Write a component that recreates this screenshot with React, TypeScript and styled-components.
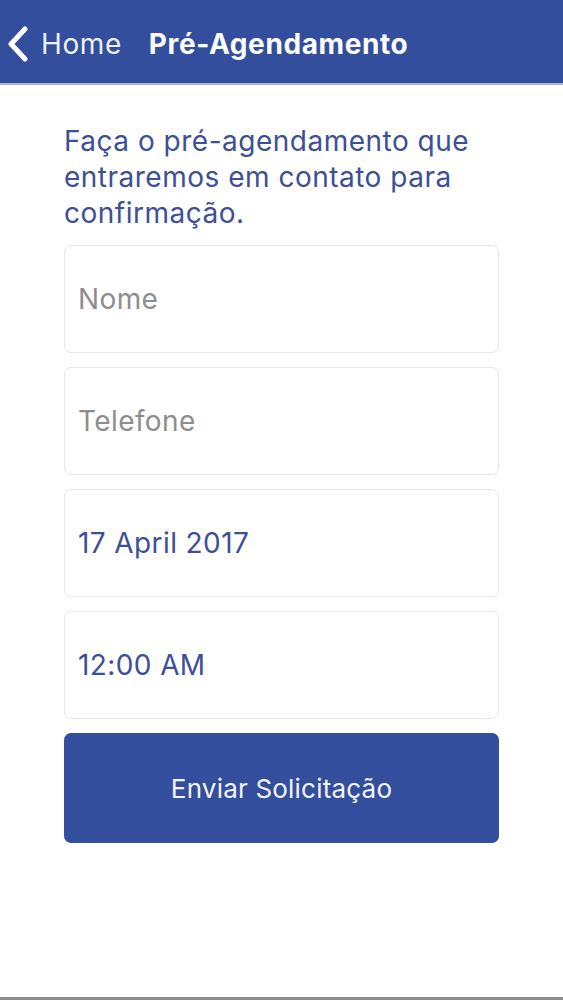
import styled, { createGlobalStyle } from 'styled-components';

const GlobalStyle = createGlobalStyle`
  html, body {
    margin: 0;
    padding: 0;
    background: #ffffff;
    font-family: Inter, Roboto, "Liberation Sans", Arial, sans-serif;
  }
`;

const Screen = styled.div`
  width: 563px;
  height: 1000px;
  display: flex;
  flex-direction: column;
  background: #ffffff;
  box-sizing: border-box;
  border-bottom: 3px solid #8c8c8c;
  overflow: hidden;
`;

const NavBar = styled.header`
  height: 85px;
  flex-shrink: 0;
  background: #324e9d;
  border-bottom: 2px solid #aab4d6;
  box-sizing: border-box;
  display: flex;
  align-items: center;
  padding: 5px 0 0 7px;
  gap: 27px;
`;

const BackButton = styled.button`
  display: flex;
  align-items: center;
  gap: 12px;
  background: none;
  border: none;
  padding: 0;
  color: #eef1fa;
  font-family: inherit;
  font-size: 28px;
  letter-spacing: 0.6px;
  cursor: pointer;
`;

const Title = styled.h1`
  margin: 0;
  color: #ffffff;
  font-size: 28px;
  font-weight: 700;
  letter-spacing: 0.6px;
`;

const Content = styled.main`
  display: flex;
  flex-direction: column;
  padding: 38px 64px 0 64px;
`;

const Intro = styled.p`
  margin: 0 0 14px 0;
  color: #3d4f96;
  font-size: 28px;
  letter-spacing: 0.5px;
  line-height: 36px;
`;

const Form = styled.form`
  display: flex;
  flex-direction: column;
  gap: 14px;
`;

const Field = styled.div<{ $filled?: boolean }>`
  height: 108px;
  box-sizing: border-box;
  border: 1.5px solid #e6e6e9;
  border-radius: 7px;
  display: flex;
  align-items: center;
  padding: 0 13px;
  font-size: 28px;
  letter-spacing: 0.4px;
  color: ${(p) => (p.$filled ? '#3d4f96' : '#8d8d8f')};
`;

const SubmitButton = styled.button`
  height: 110px;
  border: none;
  border-radius: 7px;
  background: #324e9d;
  color: #f2f4fa;
  font-family: inherit;
  font-size: 26px;
  letter-spacing: 0.2px;
  cursor: pointer;
`;

const fields = [
  { label: 'Nome', filled: false },
  { label: 'Telefone', filled: false },
  { label: '17 April 2017', filled: true },
  { label: '12:00 AM', filled: true },
];

export default function App() {
  return (
    <>
      <GlobalStyle />
      <Screen>
        <NavBar>
          <BackButton type="button">
            <svg width="22" height="36" viewBox="0 0 22 36">
              <path d="M18 3 L4 18 L18 33" fill="none" stroke="#ffffff" strokeWidth="5" strokeLinecap="round" strokeLinejoin="round" />
            </svg>
            Home
          </BackButton>
          <Title>Pré-Agendamento</Title>
        </NavBar>
        <Content>
          <Intro>Faça o pré-agendamento que entraremos em contato para confirmação.</Intro>
          <Form onSubmit={(e) => e.preventDefault()}>
            {fields.map((f) => (
              <Field key={f.label} $filled={f.filled}>
                {f.label}
              </Field>
            ))}
            <SubmitButton type="submit">Enviar Solicitação</SubmitButton>
          </Form>
        </Content>
      </Screen>
    </>
  );
}
